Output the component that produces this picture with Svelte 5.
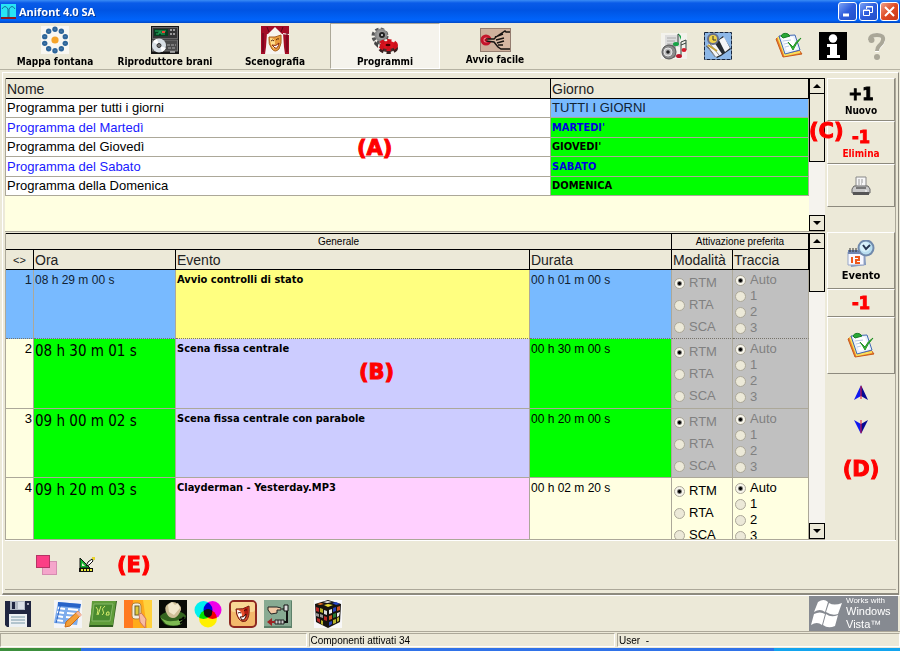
<script>
	const tabs = [
		{ id: 'fountain', label: 'Mappa fontana' },
		{ id: 'player', label: 'Riproduttore brani' },
		{ id: 'stage', label: 'Scenografia' },
		{ id: 'gears', label: 'Programmi' },
		{ id: 'press', label: 'Avvio facile' }
	];

	const programs = [
		{ name: 'Programma per tutti i giorni', day: 'TUTTI I GIORNI' },
		{ name: 'Programma del Martedì', day: "MARTEDI'" },
		{ name: 'Programma del Giovedì', day: "GIOVEDI'" },
		{ name: 'Programma del Sabato', day: 'SABATO' },
		{ name: 'Programma della Domenica', day: 'DOMENICA' }
	];

	const modes = ['RTM', 'RTA', 'SCA'];
	const tracks = ['Auto', '1', '2', '3'];

	let events = $state([
		{ time: '08 h 29 m 00 s', name: 'Avvio controlli di stato', length: '00 h 01 m 00 s', kind: 'control', locked: true, mode: 'RTM', track: 'Auto' },
		{ time: '08 h 30 m 01 s', name: 'Scena fissa centrale', length: '00 h 30 m 00 s', kind: 'scene', locked: true, mode: 'RTM', track: 'Auto' },
		{ time: '09 h 00 m 02 s', name: 'Scena fissa centrale con parabole', length: '00 h 20 m 00 s', kind: 'scene', locked: true, mode: 'RTM', track: 'Auto' },
		{ time: '09 h 20 m 03 s', name: 'Clayderman - Yesterday.MP3', length: '00 h 02 m 20 s', kind: 'song', locked: false, mode: 'RTM', track: 'Auto' }
	]);

	let activeTab = $state('gears');
	let selectedProgram = $state(0);
	let selectedEvent = $state(0);

	const dots = Array.from({ length: 10 }, (_, i) => {
		const a = ((i * 36 - 90) * Math.PI) / 180;
		return { x: 14 + 10.8 * Math.cos(a), y: 14 + 10.8 * Math.sin(a) };
	});
</script>

{#snippet icon(name)}
	{#if name === 'fountain'}
		<svg width="28" height="28" viewBox="0 0 28 28" aria-hidden="true">
			<rect width="28" height="28" fill="#f8f7f2" />
			{#each dots as d}
				<circle cx={d.x} cy={d.y} r="2.7" fill="#2d659a" />
				<path d="M{d.x - 1} {d.y}h2" stroke="#5b88b2" stroke-width=".8" />
			{/each}
			<circle cx="14" cy="14" r="3.6" fill="#f5a42a" />
		</svg>
	{:else if name === 'player'}
		<svg width="28" height="28" viewBox="0 0 28 28" aria-hidden="true">
			<rect width="28" height="28" fill="#151515" />
			<rect x="1.500" y="1.500" width="25" height="11" fill="#343434" stroke="#666" />
			<rect x="3" y="3" width="14" height="7" fill="#063d20" />
			<path d="M4 5h11M5 8h3v-2h2v2h4" stroke="#24b460" fill="none" />
			<path d="M11 6h3" stroke="#f04332" stroke-width="2" />
			<path d="M19 4h6M19 8h6" stroke="#999" stroke-dasharray="2 1" stroke-width="2" />
			<rect x="1.500" y="14" width="25" height="11" fill="#4a4a4a" stroke="#777" />
			<path d="M16 19h9M17 22h7" stroke="#aaa" stroke-dasharray="3 1" />
			<circle cx="8" cy="19.500" r="7" fill="#d9e0e5" />
			<path d="M8 19l-6-3a7 7 0 0 1 4-3zM9 20l6 2a7 7 0 0 1-4 4z" fill="#fff" />
			<circle cx="8" cy="19.500" r="2" fill="#777" stroke="#333" />
			<path d="M19 26h5" stroke="#fff" />
		</svg>
	{:else if name === 'stage'}
		<svg width="28" height="28" viewBox="0 0 28 28" aria-hidden="true">
			<rect width="28" height="28" fill="#f7f4ef" />
			<path d="M0 0h28v9l-7-1-4-4-3-3-3 3-4 4-7 1zM0 8l6-1-1 14-1 7H0zM28 8l-6-1 1 14 1 7h4z" fill="#a30b26" />
			<path d="M2 7v19M26 7v19M6 1l2 5M22 1l-2 5" stroke="#5d0518" />
			<path d="M8 11q6 1 12-2 1 9-2 14-4 4-7 0-4-5-3-12z" fill="#e79a3c" stroke="#a8601f" />
			<path d="M9 12q5 0 5 5l-1 6q-4-4-4-11z" fill="#ffdd8c" />
			<path d="M10 15q2-2 3 0M15 14q2-2 3-1" stroke="#5b260c" fill="none" />
			<path d="M11 19q4 2 7-2-1 6-4 5z" fill="#fff" stroke="#8a2a12" />
		</svg>
	{:else if name === 'gears'}
		<svg width="28" height="28" viewBox="0 0 28 28" aria-hidden="true">
			<circle cx="9" cy="10" r="6.500" fill="none" stroke="#555" stroke-width="4" stroke-dasharray="3 2.100" />
			<circle cx="10" cy="9" r="5.500" fill="#999" stroke="#8a8a8a" stroke-width="2" />
			<circle cx="11" cy="9" r="2" fill="#ddd" stroke="#222" stroke-width="2" />
			<path d="M4 15l3 3v4l-4-4z" fill="#444" />
			<ellipse cx="17" cy="22" rx="8" ry="4" fill="#4a3030" stroke="#3a2020" stroke-width="4" stroke-dasharray="4 3" />
			<ellipse cx="17" cy="19" rx="8" ry="4" fill="#dc1420" stroke="#cf101b" stroke-width="4" stroke-dasharray="4 3" />
			<ellipse cx="17" cy="19" rx="2.500" ry="1.200" fill="#400" />
		</svg>
	{:else if name === 'press'}
		<svg width="31" height="24" viewBox="0 0 31 24" aria-hidden="true">
			<rect x=".5" y=".5" width="30" height="23" fill="#ceb09c" stroke="#947d70" />
			<circle cx="6" cy="12" r="4" fill="#f28890" stroke="#c4152b" stroke-width="3" />
			<path d="M5 11h9l9-8h7v18h-9l-3-3-5-4-8-1z" fill="#d6b8a3" />
			<path d="M30 4h-4l-1-1-9 6-2 2H6M6 13l8 1 4 5 3 2h9M15 9l8-3M16 12l8-2M17 15l7-2M18 17h5" fill="none" stroke="#171311" stroke-width="1.500" />
			<circle cx="6" cy="12" r="1.500" fill="#a30c1f" />
		</svg>
	{:else if name === 'music'}
		<svg width="28" height="28" viewBox="0 0 28 28" aria-hidden="true">
			<path d="M1 1h26v26H1z" fill="#f3f2ec" />
			<path d="M5 3h15v12H5z" fill="#ddd" /><path d="M7 6h9M7 9h8M7 12h8" stroke="#aaa" />
			<path d="M4 15l11-2v12l-10 1z" fill="#aaa" stroke="#777" />
			<circle cx="9" cy="20" r="7" fill="#8a8a8a" stroke="#555" />
			<circle cx="8" cy="20" r="4" fill="#bbb" stroke="#e8e8e8" /><circle cx="8" cy="20" r="1.800" fill="#222" />
			<path d="M18 12V2l3 3M21 23V10l5-2v10M21 13l5-2" fill="none" stroke="#33403a" />
			<ellipse cx="16" cy="12" rx="3" ry="2" fill="#18a447" /><path d="M18 1l3 3v4z" fill="#18a447" />
			<ellipse cx="19" cy="24" rx="3" ry="2" fill="#bb162b" /><ellipse cx="24" cy="18" rx="2.500" ry="2" fill="#d61c2c" />
		</svg>
	{:else if name === 'planner'}
		<svg width="28" height="28" viewBox="0 0 28 28" aria-hidden="true">
			<rect x=".5" y=".5" width="27" height="27" fill="#8db8e8" stroke="#17263e" stroke-dasharray="4 1" />
			<path d="M2 14l11-5 6-5 8 13-10 7-4 2z" fill="#252b31" />
			<path d="M3 13l7-3 8 12-6 3zM15 8l5-3 6 11-5 4z" fill="#f4f6f8" />
			<path d="M3 14l8 11M6 12l9 11" stroke="#888" />
			<circle cx="9" cy="7" r="5" fill="#f0d34a" stroke="#68708a" stroke-width="2" />
			<path d="M9 4v4h3" fill="none" stroke="#333" /><path d="M4 13l9 6" stroke="#c3a136" stroke-width="2" />
		</svg>
	{:else if name === 'check'}
		<svg width="28" height="28" viewBox="0 0 28 28" aria-hidden="true">
			<path d="M1 7l7 18 19-3-3-4-14 3L5 4z" fill="#ec7b2d" stroke="#c65b1a" />
			<path d="M3 5l7 18 15-3" fill="none" stroke="#f9e05c" stroke-width="2" />
			<path d="M4 4l16-1 5 15-15 4z" fill="#e8f0fb" stroke="#426ab4" />
			<path d="M7 6l11-1 4 12-10 2z" fill="#fff" /><path d="M8 9l8-1M9 12l5-1M10 15l4-1" stroke="#b8cae5" />
			<path d="M6 4q2-4 7-2l2 2-7 2z" fill="#29a936" stroke="#187c25" />
			<path d="M13 10l5 5q3-6 8-9-6 7-8 12-2-4-5-8z" fill="#35bd35" stroke="#229125" />
		</svg>
	{:else if name === 'info'}
		<svg width="28" height="28" viewBox="0 0 28 28" aria-hidden="true">
			<rect width="28" height="28" fill="#000" />
			<circle cx="14" cy="6.500" r="4.200" fill="#fff" /><path d="M8 12h10v11h3v3H8v-3h3v-8H8z" fill="#fff" />
		</svg>
	{:else if name === 'help'}
		<svg width="28" height="28" viewBox="0 0 28 28" aria-hidden="true">
			<path d="M8 9q-1-6 6-6 7 0 6 6-.5 3-4 6-2 2-2 5" fill="none" stroke="#fff" stroke-width="4" />
			<path d="M7 8q0-5 7-5 7 0 6 5-.5 3-4 6-2 2-2 5" fill="none" stroke="#aaa798" stroke-width="4" />
			<circle cx="8.500" cy="8" r="3" fill="#aaa798" /><circle cx="14" cy="25" r="3" fill="#aaa798" />
		</svg>
	{:else if name === 'printer'}
		<svg width="20" height="20" viewBox="0 0 20 20" aria-hidden="true">
			<path d="M5 1h10v10H5z" fill="#f7f7f7" stroke="#888" /><path d="M7 4h6M7 6h6M7 8h4" stroke="#999" stroke-dasharray="2 1" />
			<path d="M3 10h14l2 3v4H1v-4z" fill="#c9c9c9" stroke="#666" /><path d="M2 16h16v3H2z" fill="#555" />
			<path d="M5 11h10v2H5z" fill="#777" /><path d="M14 15h2" stroke="#fff" />
		</svg>
	{:else if name === 'calendar'}
		<svg width="28" height="28" viewBox="0 0 28 28" aria-hidden="true">
			<path d="M2 11h16l1 14-15 2z" fill="#8097bd" /><path d="M1 12h16v13H1z" fill="#f7f8ff" stroke="#97a6c7" />
			<path d="M1 10h16v4H1z" fill="#7186b1" /><path d="M3 12V8M6 12V8M9 12V8M12 12V8M15 12V8" stroke="#333" />
			<path d="M5 17v6M4 18h1M8 17h4v3H9v3h4" stroke="#f0591b" stroke-width="2" fill="none" />
			<circle cx="19" cy="8" r="7.500" fill="#b9def0" stroke="#718aac" stroke-width="2" />
			<circle cx="18" cy="7" r="5" fill="#d8f1fb" /><path d="M16 5l3 4 4-4" fill="none" stroke="#263650" stroke-width="2" />
		</svg>
	{:else if name === 'up'}
		<svg width="14" height="16" viewBox="0 0 14 16" aria-hidden="true">
			<path d="M7 0L0 15l7-4z" fill="#1119f0" /><path d="M7 0l7 15-7-4z" fill="#060894" /><path d="M7 1v13" stroke="#e31935" />
		</svg>
	{:else if name === 'down'}
		<svg width="14" height="16" viewBox="0 0 14 16" aria-hidden="true">
			<path d="M7 15L0 1l7 4z" fill="#1119f0" /><path d="M7 15l7-14-7 4z" fill="#060894" /><path d="M7 1v13" stroke="#e31935" />
		</svg>
	{:else if name === 'copy'}
		<svg width="21" height="20" viewBox="0 0 21 20" aria-hidden="true">
			<rect x="6.500" y="6.500" width="14" height="13" fill="#f5a5cb" stroke="#d68bb0" /><rect x=".5" y=".5" width="13" height="12" fill="#fb3f86" stroke="#b63465" />
		</svg>
	{:else if name === 'design'}
		<svg width="16" height="16" viewBox="0 0 16 16" aria-hidden="true">
			<path d="M1 1l10 10H1z" fill="#15b332" stroke="#111" /><path d="M3 6v3h3z" fill="#ece9d8" />
			<path d="M0 11h14v4H0z" fill="#111" /><path d="M2 13h11" stroke="#eded40" stroke-dasharray="2 1" stroke-width="2" />
			<path d="M7 9l2-4 4-3 1 2-4 4z" fill="#fff" stroke="#111" /><path d="M13 1h2v2" stroke="#e9d52d" fill="none" stroke-width="2" />
		</svg>
	{:else if name === 'save'}
		<svg width="28" height="28" viewBox="0 0 28 28" aria-hidden="true">
			<path d="M1 1h26v26H3l-2-2z" fill="#202641" /><path d="M6 1h15v9H6z" fill="#b3bac5" /><path d="M8 2h3v7H8z" fill="#202641" /><path d="M14 2h6v7h-6z" fill="#dce1e8" />
			<path d="M5 14h18v13H5z" fill="#edf1f3" /><path d="M7 17h14M7 20h14M7 23h14" stroke="#7898a8" />
			<path d="M23 3h2v2h-2z" fill="#aab" />
		</svg>
	{:else if name === 'form'}
		<svg width="28" height="28" viewBox="0 0 28 28" aria-hidden="true">
			<rect width="28" height="28" fill="#f4f5f7" /><path d="M4 2l23 2-4 21-23-2z" fill="#7dacec" />
			<path d="M4 2l23 2-1 4L4 6z" fill="#2864c8" />
			<path d="M4 8l7 1M14 9l10 1M3 12l7 1M13 13l10 1M3 16l6 1M12 17l10 1M2 20l7 1" stroke="#fff" stroke-width="2" />
			<path d="M7 3l-5 20" stroke="#2864c8" /><path d="M12 22L24 11l3 4-11 11-5 1z" fill="#f39f38" stroke="#c96b18" /><path d="M23 12l4 4" stroke="#f2b5a0" stroke-width="3" />
		</svg>
	{:else if name === 'board'}
		<svg width="28" height="28" viewBox="0 0 28 28" aria-hidden="true">
			<path d="M4 1h24l-4 26H0z" fill="#315e20" /><path d="M3 1h24l-3 24H1z" fill="#5f9c3a" /><path d="M5 4h19l-3 17H3z" fill="#4a8b2f" stroke="#86b867" />
			<path d="M7 7l2 3-1 5M12 6l-3 9M16 6q-4 3-2 5t-1 4M18 12h2v3h-3z" fill="none" stroke="#d2e96b" />
		</svg>
	{:else if name === 'switch'}
		<svg width="28" height="28" viewBox="0 0 28 28" aria-hidden="true">
			<rect width="28" height="28" fill="#ffab1b" /><path d="M0 0h9v28H0z" fill="#ff7a20" />
			<path d="M19 0h9v28h-5z" fill="#ffd13c" />
			<rect x="8" y="3" width="9" height="16" rx="3" fill="#f2eee2" stroke="#b08338" /><rect x="11" y="6" width="4" height="9" fill="#e0c93c" stroke="#665b2d" />
			<path d="M15 14q3-2 4 1l3 4-1 9-5-6z" fill="#f7bca4" stroke="#cf765b" />
		</svg>
	{:else if name === 'globe'}
		<svg width="28" height="28" viewBox="0 0 28 28" aria-hidden="true">
			<rect width="28" height="28" fill="#090b06" />
			<path d="M1 16q5-5 13-5 10 0 13 5-2 10-13 10Q3 26 1 16z" fill="#35651f" />
			<path d="M8 14q-4-7 1-10 5-4 10 0 5 3 2 8-3 6-7 6-4 0-6-4z" fill="#cfbf96" />
			<path d="M9 5l4-3 3 3 3-2 2 5-6 7-5-3z" fill="#f1e7ca" />
			<path d="M1 17q5 5 13 4 7 0 10-4l-2 7q-7 3-15 0z" fill="#7db951" />
			<path d="M20 20q3 0 5-3M21 23q3-1 5-4" fill="none" stroke="#000" stroke-width="2" />
		</svg>
	{:else if name === 'colors'}
		<svg width="28" height="28" viewBox="0 0 28 28" aria-hidden="true">
			<g class="mix"><circle cx="9.500" cy="10" r="9" fill="#00f0f0" /><circle cx="18.500" cy="10" r="9" fill="#f000e8" /><circle cx="14" cy="18.500" r="9" fill="#fff000" /></g>
			<circle cx="14" cy="13" r="4" fill="#111" />
		</svg>
	{:else if name === 'mask'}
		<svg width="28" height="28" viewBox="0 0 28 28" aria-hidden="true">
			<rect x="1" y="1" width="26" height="26" rx="4" fill="#f3b96b" stroke="#8e2820" stroke-width="2" />
			<rect x="2" y="2" width="24" height="10" rx="3" fill="#f9d794" />
			<path d="M7 9q7 1 13-3 1 11-3 15-4 2-7-2-3-4-3-10z" fill="#e2502a" stroke="#6f1a12" />
			<path d="M8 10q4 0 5 5l-1 5q-4-4-4-10z" fill="#fff" />
			<path d="M15 8l4-1q1 9-3 12z" fill="#b01c12" />
			<path d="M9 13q2-1 3 0M15 11q2-2 3-1" stroke="#381008" fill="none" />
			<path d="M11 17q4 1 6-3 0 6-4 6z" fill="#fff" stroke="#381008" />
		</svg>
	{:else if name === 'relay'}
		<svg width="28" height="28" viewBox="0 0 28 28" aria-hidden="true">
			<rect width="28" height="28" fill="#87aa92" /><path d="M0 27h28V1" stroke="#5d8069" fill="none" stroke-width="2" />
			<path d="M4 7h9l4 1v2h-4v3l-6 1-3-4z" fill="#f1c8a5" stroke="#222" />
			<path d="M18 9h2M20 5h4v6h-4z" stroke="#111" fill="#ddd" /><path d="M23 11v11h-3" fill="none" stroke="#111" stroke-width="2" />
			<path d="M11 20h9v4h-9z" fill="#ccc" stroke="#222" /><path d="M14 20v4M17 20v4" stroke="#222" /><path d="M3 22l5-4v3h3v2H8v3z" fill="#9c2424" />
		</svg>
	{:else if name === 'cube'}
		<svg width="28" height="28" viewBox="0 0 28 28" aria-hidden="true">
			<rect width="28" height="28" fill="#f8f8f8" /><path d="M1 4L14 0l13 4-1 18-12 6L2 22z" fill="#16130f" />
			<path d="M3 4l4-1 3 1-4 1z" fill="#e96e23" /><path d="M9 2l5-1 4 1-5 1z" fill="#eee" /><path d="M18 3l4-1 4 2-4 1z" fill="#2442c4" /><path d="M10 5l4-1 5 1-5 2z" fill="#ecdd34" />
			<path d="M2 7l3 1v4l-3-1zM10 16l3 1v4l-3-1zM3 18l3 1v4l-3-2z" fill="#b62624" />
			<path d="M6 8l3 1v4l-3-1zM7 20l2 1v4l-2-1z" fill="#b8b42b" /><path d="M10 10l3 1v4l-3-1z" fill="#ddd" />
			<path d="M2 13l3 1v3l-3-1zM6 14l3 1v3l-3-1z" fill="#999" /><path d="M15 10l3-1v4l-3 1zM23 13l3-1-1 4-2 1z" fill="#eee" />
			<path d="M19 8l3-1v4l-3 1zM15 22l3-1v3l-3 2z" fill="#2641bd" /><path d="M23 7l3-1v4l-3 1zM15 16l3-1v4l-3 1z" fill="#cf5423" />
			<path d="M19 14l3-1v4l-3 1z" fill="#267b35" /><path d="M19 20l3-1v4l-3 1zM23 18l2-1v4l-2 1z" fill="#b8b42b" />
		</svg>
	{/if}
{/snippet}

{#snippet scrollbar(label)}
	<div class="scrollbar">
		<button class="scroll-btn" aria-label="{label} su"><svg width="8" height="4" viewBox="0 0 8 4"><path d="M0 4l4-4 4 4z" /></svg></button>
		<div class="thumb"></div>
		<button class="scroll-btn last" aria-label="{label} giù"><svg width="8" height="4" viewBox="0 0 8 4"><path d="M0 0l4 4 4-4z" /></svg></button>
	</div>
{/snippet}

<div class="window">
	<header class="titlebar">
		<svg width="15" height="15" viewBox="0 0 15 15" aria-hidden="true">
			<rect width="15" height="15" fill="#28e4f4" />
			<path d="M1 5q3-5 6 0v8M8 13V5q3-5 6 0" fill="none" stroke="#176b9c" />
			<path d="M0 14h15" stroke="#8b1822" stroke-width="2" />
		</svg>
		<h1>Anifont 4.0 SA</h1>
		<div class="window-buttons">
			<button aria-label="Riduci"><svg width="17" height="17" viewBox="0 0 17 17"><path d="M4 12h6" stroke="#fff" stroke-width="3" /></svg></button>
			<button aria-label="Ripristina"><svg width="17" height="17" viewBox="0 0 17 17"><path d="M6.500 6V3.500h6v6H10M6 4h7M3.500 7h6v5.500h-6zM3 7.500h7" fill="none" stroke="#fff" /></svg></button>
			<button class="close" aria-label="Chiudi"><svg width="17" height="17" viewBox="0 0 17 17"><path d="M4 4l9 9M13 4l-9 9" stroke="#fff" stroke-width="2" /></svg></button>
		</div>
	</header>

	<nav class="toolbar">
		{#each tabs as tab}
			<button class="tab" class:active={activeTab === tab.id} onclick={() => (activeTab = tab.id)}>
				{@render icon(tab.id)}
				<span>{tab.label}</span>
			</button>
		{/each}
		<div class="tools">
			<button aria-label="Musica">{@render icon('music')}</button>
			<button aria-label="Agenda">{@render icon('planner')}</button>
			<button class="spaced" aria-label="Verifica">{@render icon('check')}</button>
			<button aria-label="Informazioni">{@render icon('info')}</button>
			<button aria-label="Aiuto">{@render icon('help')}</button>
		</div>
	</nav>

	<main>
		<div class="workspace">
			<div class="grids">
				<!-- Programs -->
				<section class="pane programs">
					<div class="pane-body">
						<table>
							<colgroup><col /><col class="col-day" /></colgroup>
							<thead>
								<tr><th>Nome</th><th>Giorno</th></tr>
							</thead>
							<tbody>
								{#each programs as program, i}
									<tr class:alt={i % 2 === 1} class:selected={selectedProgram === i} onclick={() => (selectedProgram = i)}>
										<td>{program.name}</td>
										<td class="day">{program.day}</td>
									</tr>
								{/each}
							</tbody>
						</table>
						<span class="mark mark-a">(A)</span>
					</div>
					{@render scrollbar('Programmi')}
				</section>

				<!-- Events -->
				<section class="pane events">
					<div class="pane-body">
						<table>
							<colgroup>
								<col class="col-num" /><col class="col-time" /><col /><col class="col-time" /><col class="col-mode" /><col class="col-track" />
							</colgroup>
							<thead>
								<tr class="groups"><th colspan="4">Generale</th><th colspan="2">Attivazione preferita</th></tr>
								<tr>
									<th class="arrows">&lt;&gt;</th><th>Ora</th><th>Evento</th><th>Durata</th><th>Modalità</th><th>Traccia</th>
								</tr>
							</thead>
							<tbody>
								{#each events as event, i}
									<tr class={event.kind} class:selected={selectedEvent === i} class:locked={event.locked} onclick={() => (selectedEvent = i)}>
										<td class="num">{i + 1}</td>
										<td class="time">{event.time}</td>
										<td class="name">{event.name}</td>
										<td class="length">{event.length}</td>
										<td class="choice">
											<div class="radios modes">
												{#each modes as mode}
													<label><input type="radio" name="mode-{i}" value={mode} bind:group={event.mode} disabled={event.locked} />{mode}</label>
												{/each}
											</div>
										</td>
										<td class="choice">
											<div class="radios tracks">
												{#each tracks as track}
													<label><input type="radio" name="track-{i}" value={track} bind:group={event.track} disabled={event.locked} />{track}</label>
												{/each}
											</div>
										</td>
									</tr>
								{/each}
							</tbody>
						</table>
						<span class="mark mark-b">(B)</span>
					</div>
					{@render scrollbar('Eventi')}
				</section>
			</div>

			<aside>
				<div class="group first">
					<button class="side"><b class="big">+1</b><span>Nuovo</span></button>
					<button class="side remove"><b class="big">-1</b><span>Elimina</span></button>
					<button class="side" aria-label="Stampa">{@render icon('printer')}</button>
					<span class="mark mark-c">(C)</span>
				</div>
				<div class="group">
					<button class="side tall event">{@render icon('calendar')}<span>Evento</span></button>
					<button class="side short remove"><b class="big">-1</b></button>
					<button class="side tall" aria-label="Verifica programma">{@render icon('check')}</button>
				</div>
				<div class="movers">
					<button aria-label="Sposta su">{@render icon('up')}</button>
					<button aria-label="Sposta giù">{@render icon('down')}</button>
					<span class="mark">(D)</span>
				</div>
			</aside>
		</div>

		<div class="extras">
			<button aria-label="Copia">{@render icon('copy')}</button>
			<button aria-label="Disegno">{@render icon('design')}</button>
			<span class="mark">(E)</span>
		</div>
	</main>

	<nav class="bottombar">
		<button aria-label="Salva">{@render icon('save')}</button>
		<button class="spaced" aria-label="Modulo">{@render icon('form')}</button>
		<button aria-label="Lavagna">{@render icon('board')}</button>
		<button aria-label="Interruttore">{@render icon('switch')}</button>
		<button aria-label="Globo">{@render icon('globe')}</button>
		<button aria-label="Colori">{@render icon('colors')}</button>
		<button aria-label="Maschera">{@render icon('mask')}</button>
		<button aria-label="Contatti">{@render icon('relay')}</button>
		<button class="spaced" aria-label="Cubo">{@render icon('cube')}</button>
		<div class="vista">
			<svg width="32" height="30" viewBox="0 0 32 30" aria-hidden="true">
				<path d="M7 3q6-4 10 0l-3 10q-5-4-11 0zM18 4q5 3 13 0l-4 11q-6 2-12-2zM3 15q6-3 11 0l-3 11q-5-4-11 0zM15 15q5 4 12 1l-3 11q-7 3-12-1z" fill="#fff" />
			</svg>
			<div>
				<small>Works with</small>
				<strong>Windows</strong>
				<span>Vista™</span>
			</div>
		</div>
	</nav>

	<footer class="status">
		<span></span>
		<span>Componenti attivati 34</span>
		<span class="user">User &nbsp;-</span>
	</footer>
	<div class="taskbar"></div>
</div>

<style>
	:global(body) {
		margin: 0;
	}

	.window {
		display: flex;
		flex-direction: column;
		height: 100vh;
		overflow: hidden;
		background: #ece9d8;
		color: #000;
		font-family: 'Liberation Sans', Arial, sans-serif;
		font-size: 13px;
	}

	* {
		box-sizing: border-box;
	}

	button {
		display: flex;
		align-items: center;
		justify-content: center;
		margin: 0;
		padding: 0;
		border: 0;
		background: none;
		color: inherit;
		font: bold 10px 'DejaVu Sans Condensed', 'DejaVu Sans', sans-serif;
	}

	svg {
		display: block;
		flex: none;
	}

	.titlebar {
		display: flex;
		align-items: center;
		gap: 3px;
		height: 23px;
		flex: none;
		padding: 0 1px;
		background: linear-gradient(#3a8cf5, #0a5be8 3px, #0054e3 10px, #0164fb 20px, #0148c4);
	}

	h1 {
		margin: 0;
		color: #fff;
		font: bold 11px 'Noto Sans', sans-serif;
		text-shadow: 1px 1px #0a3a98;
	}

	.window-buttons {
		display: flex;
		gap: 2px;
		margin-left: auto;
	}

	.window-buttons button {
		width: 19px;
		height: 19px;
		border: 1px solid #fff;
		border-radius: 3px;
		background: linear-gradient(135deg, #7da3f5, #2c5bdc 50%, #2450c8);
	}

	.window-buttons .close {
		background: linear-gradient(135deg, #f0a088, #df4a22 50%, #c8381a);
	}

	.toolbar {
		display: flex;
		flex: none;
		height: 47px;
		border-bottom: 1px solid #b5b2a2;
	}

	.tab {
		flex-direction: column;
		gap: 2px;
		width: 110px;
		border: 1px solid transparent;
	}

	.tab.active {
		border-color: #aca899 #fff #fff #aca899;
		background: #f5f3ec;
	}

	.tools {
		display: flex;
		margin-left: auto;
		margin-right: 1px;
	}

	.tools button {
		width: 44px;
	}

	.tools .spaced {
		margin-left: 27px;
	}

	main {
		display: flex;
		flex: 1;
		flex-direction: column;
		min-height: 0;
		margin: 2px 1px 0 2px;
		padding: 5px 2px 3px 2px;
		border: solid;
		border-width: 1px 1px 2px 1px;
		border-color: #fff #8d8a7e #8d8a7e #fff;
	}

	.workspace {
		display: flex;
		flex: 1;
		gap: 2px;
		min-height: 0;
	}

	.grids {
		display: flex;
		flex: 1;
		flex-direction: column;
		gap: 1px;
		min-width: 0;
	}

	.pane {
		display: flex;
		overflow: hidden;
		border-bottom: 1px solid #aca899;
	}

	.programs {
		flex: 0 0 154px;
	}

	.events {
		flex: 1;
	}

	.pane-body {
		position: relative;
		flex: 1;
		min-width: 0;
		background: #ffffe1;
	}

	table {
		width: 100%;
		border-collapse: separate;
		border-spacing: 0;
		table-layout: fixed;
		border-left: 1px solid #aca899;
	}

	.col-day {
		width: 258px;
	}

	.col-num {
		width: 28px;
	}

	.col-time {
		width: 142px;
	}

	.col-mode {
		width: 61px;
	}

	.col-track {
		width: 76px;
	}

	th {
		height: 20px;
		padding: 0 1px;
		border: solid #000;
		border-width: 0 1px 1px 0;
		background: #ece9d8;
		color: #222;
		font-size: 14px;
		font-weight: normal;
		line-height: 18px;
		text-align: left;
	}

	thead tr:first-child th {
		border-top-width: 1px;
	}

	.programs th {
		height: 21px;
	}

	.groups th {
		height: 17px;
		color: #000;
		font-size: 10px;
		line-height: 15px;
		text-align: center;
	}

	.arrows {
		font-size: 11px;
		text-align: center;
	}

	td {
		overflow: hidden;
		padding: 0 1px;
		border: solid #aca899;
		border-width: 0 1px 1px 0;
		vertical-align: top;
		white-space: nowrap;
	}

	.programs td {
		height: 19px;
		background: #fff;
		line-height: 18px;
	}

	.programs .alt td {
		height: 20px;
		color: #1a1aff;
		line-height: 19px;
	}

	.programs .day {
		background: #0f0;
		font: bold 11px/18px 'DejaVu Sans Condensed', 'DejaVu Sans', sans-serif;
	}

	.programs .alt .day {
		color: #0000e0;
	}

	.programs .selected .day {
		background: #78baff;
		color: #123;
		font: 13px/18px 'Liberation Sans', Arial, sans-serif;
	}

	.events td {
		height: 69px;
		line-height: 20px;
	}

	.events tr:nth-child(even) td {
		height: 70px;
	}

	.events .num {
		text-align: right;
	}

	.events .time {
		background: #0f0;
		font: 15px/24px 'DejaVu Sans Condensed', 'DejaVu Sans', sans-serif;
	}

	.events .name {
		font: bold 11px/20px 'DejaVu Sans Condensed', 'DejaVu Sans', sans-serif;
	}

	.events .length {
		font-size: 12px;
	}

	.scene .name {
		background: #ccf;
	}

	.control .name {
		background: #ffff80;
	}

	.song .name {
		background: #ffd0ff;
	}

	.scene .length {
		background: #0f0;
	}

	.events .selected td {
		border-bottom: 1px dotted #77736a;
	}

	.selected .num,
	.events .selected .time,
	.selected .length {
		background: #78baff;
		color: #123;
	}

	.events .selected .time {
		font: 12px/20px 'Liberation Sans', Arial, sans-serif;
	}

	.locked .choice {
		background: #c0c0c0;
		color: #808080;
	}

	.radios {
		display: flex;
		flex-direction: column;
		padding: 2px 0 0 1px;
	}

	.radios label {
		display: flex;
		align-items: center;
		gap: 4px;
	}

	.modes label {
		height: 22px;
	}

	.tracks label {
		height: 16px;
	}

	.radios input {
		width: 11px;
		height: 11px;
		margin: 0;
		border: 1px solid #aca899;
		border-radius: 50%;
		background: #ece9d8;
		appearance: none;
	}

	.radios input:checked {
		background: radial-gradient(#000 1px, #f8f6ec 3px);
	}

	.scrollbar {
		display: flex;
		flex-direction: column;
		width: 16px;
		background: #f5f3ee;
	}

	.scroll-btn,
	.thumb {
		flex: none;
		border: 1px solid #000;
		background: #ece9d8;
	}

	.scroll-btn {
		height: 16px;
	}

	.scroll-btn.last {
		margin-top: auto;
	}

	.thumb {
		height: 68px;
		border-top: 0;
	}

	.events .thumb {
		height: 43px;
	}

	aside {
		display: flex;
		flex-direction: column;
		width: 69px;
		flex: none;
		border-right: 1px solid #aca899;
	}

	.group {
		position: relative;
	}

	.first {
		margin-bottom: 25px;
	}

	.side {
		flex-direction: column;
		gap: 1px;
		width: 100%;
		height: 43px;
		border: 1px solid;
		border-color: #fff #8d8a7e #8d8a7e #fff;
	}

	.tall {
		height: 57px;
	}

	.short {
		height: 28px;
	}

	.event {
		font-size: 11px;
	}

	.big {
		font-size: 18px;
		line-height: 20px;
		-webkit-text-stroke: 1px;
	}

	.remove {
		color: #f00;
	}

	.movers {
		display: flex;
		flex-direction: column;
		align-items: center;
		gap: 18px;
		padding-top: 11px;
	}

	.movers .mark {
		padding-top: 4px;
	}

	.mark {
		color: #f00;
		font: bold 21px/24px 'DejaVu Sans', sans-serif;
		-webkit-text-stroke: 1px;
	}

	.mark-a,
	.mark-b,
	.mark-c {
		position: absolute;
		pointer-events: none;
	}

	.mark-a {
		top: 58px;
		left: 352px;
	}

	.mark-b {
		top: 127px;
		left: 354px;
	}

	.mark-c {
		top: 41px;
		left: -18px;
	}

	.extras {
		display: flex;
		align-items: center;
		flex: none;
		gap: 22px;
		height: 50px;
		padding-left: 31px;
		border-top: 1px solid #fff;
		border-bottom: 1px solid #aca899;
	}

	.bottombar {
		display: flex;
		align-items: center;
		flex: none;
		gap: 7px;
		height: 37px;
		padding-left: 4px;
		border-top: 1px solid #fff;
		border-bottom: 1px solid #aca899;
	}

	.bottombar .spaced {
		margin-left: 15px;
	}

	.mix {
		isolation: isolate;
	}

	.mix circle {
		mix-blend-mode: multiply;
	}

	.vista {
		display: flex;
		align-items: center;
		gap: 3px;
		width: 89px;
		height: 35px;
		margin-left: auto;
		margin-right: 2px;
		padding-left: 2px;
		background: #868a91;
		color: #fff;
	}

	.vista small,
	.vista strong,
	.vista span {
		display: block;
		font-size: 11px;
		font-weight: normal;
		line-height: 13px;
	}

	.vista small {
		font-size: 8px;
		line-height: 9px;
	}

	.status {
		display: flex;
		flex: none;
		gap: 2px;
		height: 16px;
		padding: 1px 0;
		font-size: 10px;
		line-height: 13px;
	}

	.status span {
		flex: 1;
		padding-left: 1px;
		border: 1px solid;
		border-color: #aca899 #fff #fff #aca899;
	}

	.status .user {
		flex: 0 0 283px;
	}

	.taskbar {
		flex: none;
		height: 3px;
		background: linear-gradient(90deg, #3c8f3c 0 9%, #2f72e8 9% 86%, #12a4ee 86%);
	}
</style>
